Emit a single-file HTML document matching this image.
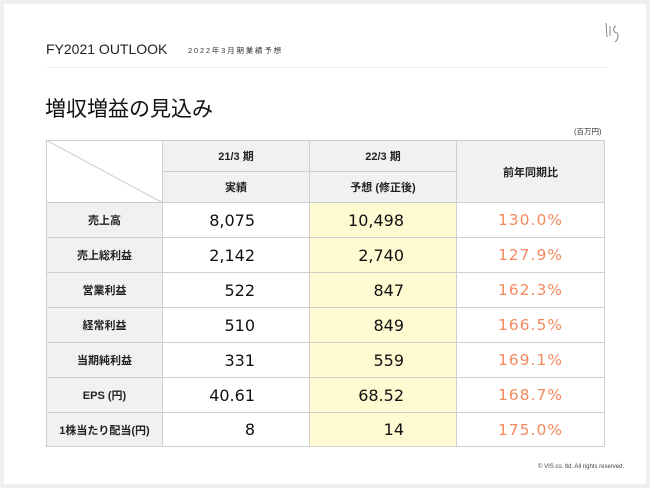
<!DOCTYPE html>
<html><head><meta charset="utf-8"><style>
*{margin:0;padding:0;box-sizing:border-box}
body{width:650px;height:488px;background:#efefef;font-family:"Liberation Sans","Noto Sans CJK JP",sans-serif;position:relative;overflow:hidden}
.card{position:absolute;left:4px;top:4px;width:642px;height:480px;background:#fff}
.abs{position:absolute}
table{position:absolute;left:46px;top:140px;border-collapse:collapse;table-layout:fixed}
td{border:1px solid #cfcfcf;text-align:center;font-size:11px;font-weight:bold;color:#222;padding:0}
.h{background:#f1f1f1}
.lab{background:#f1f1f1;width:116px}
.n{font-family:"DejaVu Sans",sans-serif;font-size:16px;font-weight:normal;text-align:right;color:#111}
.c1{width:147px;padding-right:54px}
.c2{width:147px;padding-right:52px;background:#fffad2}
.p{width:148px;font-family:"DejaVu Sans",sans-serif;font-size:15.5px;font-weight:normal;color:#f58a5e;letter-spacing:1px}
</style></head><body>
<div class="card"></div>
<svg class="abs" style="left:604px;top:20px" width="20" height="24" viewBox="0 0 20 24"><path d="M2 3 L3 17 M6 6 L6 16 M12 6 C8 8 9 12 13 13 C15 14 14 20 11 22" stroke="#888" stroke-width="1" fill="none"/></svg>
<div class="abs" style="left:46px;top:41px;font-size:14px;color:#222">FY2021 OUTLOOK</div>
<div class="abs" style="left:188px;top:45px;font-size:7.5px;color:#333;letter-spacing:1.8px">2022年3月期業績予想</div>
<div class="abs" style="left:46px;top:67px;width:560px;height:1px;background:#eee"></div>
<div class="abs" style="left:45px;top:93px;font-size:21px;color:#111">増収増益の見込み</div>
<div class="abs" style="left:574px;top:126px;font-size:7.5px;color:#333">(百万円)</div>
<svg class="abs" style="left:46px;top:140px;z-index:2" width="117" height="63"><line x1="0" y1="0" x2="117" y2="63" stroke="#ccc" stroke-width="1"/></svg>
<table>
<tr style="height:31px"><td rowspan="2" class="lab" style="background:#fff"></td><td class="h">21/3 期</td><td class="h">22/3 期</td><td class="h" rowspan="2">前年同期比</td></tr>
<tr style="height:31px"><td class="h">実績</td><td class="h">予想 (修正後)</td></tr>
<tr style="height:35px"><td class="lab">売上高</td><td class="n c1">8,075</td><td class="n c2">10,498</td><td class="p">130.0%</td></tr>
<tr style="height:35px"><td class="lab">売上総利益</td><td class="n c1">2,142</td><td class="n c2">2,740</td><td class="p">127.9%</td></tr>
<tr style="height:35px"><td class="lab">営業利益</td><td class="n c1">522</td><td class="n c2">847</td><td class="p">162.3%</td></tr>
<tr style="height:35px"><td class="lab">経常利益</td><td class="n c1">510</td><td class="n c2">849</td><td class="p">166.5%</td></tr>
<tr style="height:35px"><td class="lab">当期純利益</td><td class="n c1">331</td><td class="n c2">559</td><td class="p">169.1%</td></tr>
<tr style="height:35px"><td class="lab">EPS (円)</td><td class="n c1">40.61</td><td class="n c2">68.52</td><td class="p">168.7%</td></tr>
<tr style="height:34px"><td class="lab">1株当たり配当(円)</td><td class="n c1">8</td><td class="n c2">14</td><td class="p">175.0%</td></tr>
</table>
<div class="abs" style="left:538px;top:464px;font-size:6px;color:#444">© VIS co. ltd. All rights reserved.</div>
</body></html>
